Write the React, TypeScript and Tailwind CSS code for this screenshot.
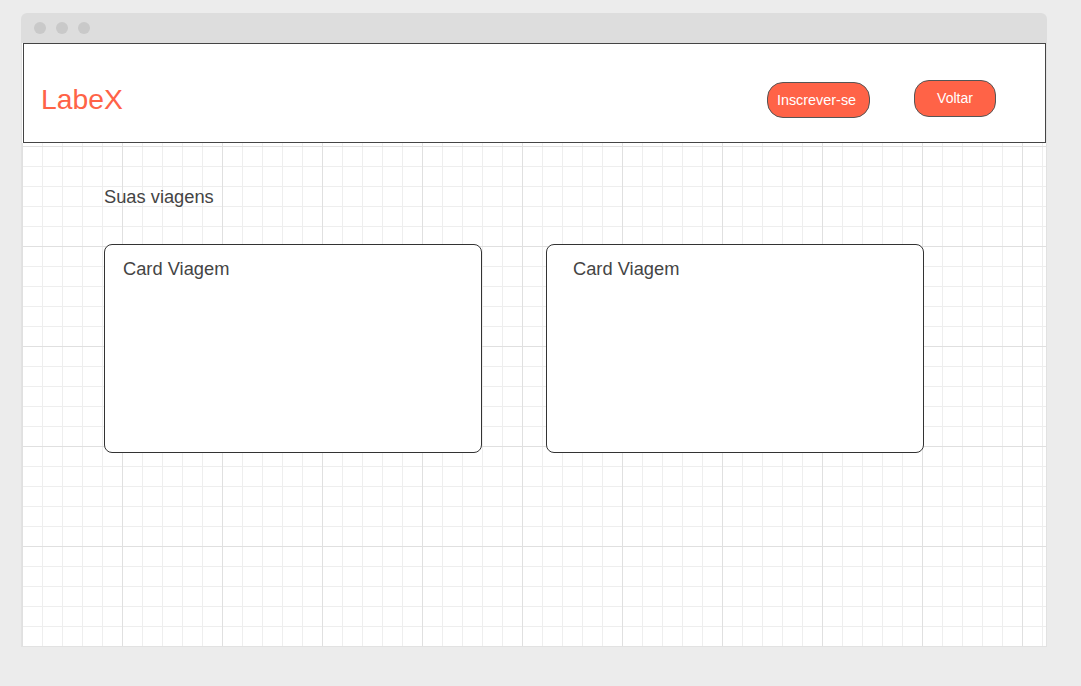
import React from "react";

export default function App() {
  return (
    <div className="w-full h-[686px] bg-[#ececec] pt-[13px] pl-[21px] font-['Liberation_Sans',Arial,sans-serif]">
      <div className="w-[1026px] h-[634px] flex flex-col rounded-t-[6px] overflow-hidden">
        {/* title bar */}
        <div className="h-[30px] bg-[#dddddd] flex items-center gap-[10px] pl-[13px] shrink-0">
          <span className="w-[12px] h-[12px] rounded-full bg-[#c9c9c9]" />
          <span className="w-[12px] h-[12px] rounded-full bg-[#c9c9c9]" />
          <span className="w-[12px] h-[12px] rounded-full bg-[#c9c9c9]" />
        </div>
        <div className="flex-1 flex flex-col bg-white border-x border-b border-[#e2e2e2]">
          {/* header */}
          <header className="h-[100px] ml-[1px] w-[1023px] border border-[#444444] bg-white flex items-center shrink-0">
            <div className="pl-[17px] text-[28.3px] text-[#ff6347] leading-none mt-[13px]">LabeX</div>
            <div className="ml-auto flex items-center mr-[49px] mt-[13px]">
              <button className="w-[103px] h-[36px] rounded-[16px] bg-[#ff6347] border border-[#555555] text-white text-[14.4px] leading-none mt-[1px] pr-[4px]">
                Inscrever-se
              </button>
              <button className="ml-[44px] w-[82px] h-[37px] rounded-[15px] bg-[#ff6347] border border-[#555555] text-white text-[14px] leading-none mt-[-3px]">
                Voltar
              </button>
            </div>
          </header>
          {/* canvas */}
          <main className="flex-1 bg-white bg-[linear-gradient(to_right,#e0e0e0_1px,transparent_1px),linear-gradient(to_bottom,#e0e0e0_1px,transparent_1px),linear-gradient(to_right,#eeeeee_1px,transparent_1px),linear-gradient(to_bottom,#eeeeee_1px,transparent_1px)] bg-[size:100px_100px,100px_100px,20px_20px,20px_20px] bg-[position:100px_3px,0_3px,0_3px,0_3px] pl-[82px]">
            <div className="mt-[45px] text-[18.3px] text-[#444444] leading-none">Suas viagens</div>
            <div className="mt-[38px] flex gap-[64px]">
              <div className="w-[378px] h-[209px] rounded-[8px] border border-[#333333] bg-white pl-[18px] pt-[15px] text-[18.3px] text-[#444444] leading-none">
                Card Viagem
              </div>
              <div className="w-[378px] h-[209px] rounded-[8px] border border-[#333333] bg-white pl-[26px] pt-[15px] text-[18.3px] text-[#444444] leading-none">
                Card Viagem
              </div>
            </div>
          </main>
        </div>
      </div>
    </div>
  );
}
